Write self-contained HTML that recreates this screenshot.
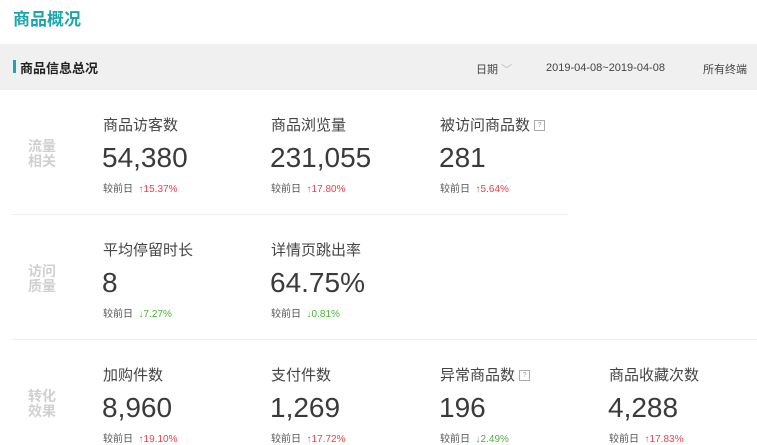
<!DOCTYPE html><html><head><meta charset="utf-8"><style>
body{margin:0;width:757px;height:442px;overflow:hidden;background:#fff;font-family:"Liberation Sans","Noto Sans CJK SC",sans-serif;position:relative}
.a{position:absolute;white-space:nowrap}
.t{left:13px;top:5px;font-size:17px;font-weight:bold;color:#1ba6ae}
.bar{left:0;top:44px;width:757px;height:46px;background:#f0f0f0}
.lbl{font-size:15px;color:#444}
.num{font-size:28px;color:#3a3a3a}
.cmp{font-size:10px;color:#555}
.up{color:#e4454e}.dn{color:#4bb33b}
.g{font-size:14px;font-weight:bold;color:#d0d0d0;line-height:15px;left:28px}
.q{display:inline-block;width:9px;height:9px;border:1px solid #aaa;font-size:7px;line-height:9px;text-align:center;color:#999;vertical-align:3px;margin-left:4px}
.hr{height:1px;background:#eee;left:12px}
</style></head><body>
<div class="a t">商品概况</div>
<div class="a bar"></div>
<div class="a" style="left:13px;top:60px;width:3px;height:13px;background:#1ba6ae"></div>
<div class="a" style="left:20px;top:58px;font-size:13px;font-weight:bold;color:#222">商品信息总况</div>
<div class="a" style="left:476px;top:61px;font-size:11px;color:#444">日期 <span style="color:#bbb">﹀</span></div>
<div class="a" style="left:546px;top:62px;font-size:11px;color:#444">2019-04-08~2019-04-08</div>
<div class="a" style="left:703px;top:61px;font-size:11px;color:#444">所有终端</div>

<div class="a g" style="top:139px">流量<br>相关</div>
<div class="a g" style="top:264px">访问<br>质量</div>
<div class="a g" style="top:389px">转化<br>效果</div>
<div class="a hr" style="top:214px;width:556px"></div>
<div class="a hr" style="top:339px;width:745px"></div>

<div class="a lbl" style="left:103px;top:114px">商品访客数</div>
<div class="a num" style="left:102px;top:142px">54,380</div>
<div class="a cmp" style="left:103px;top:180px">较前日 <span class="up">&nbsp;↑15.37%</span></div>
<div class="a lbl" style="left:271px;top:114px">商品浏览量</div>
<div class="a num" style="left:270px;top:142px">231,055</div>
<div class="a cmp" style="left:271px;top:180px">较前日 <span class="up">&nbsp;↑17.80%</span></div>
<div class="a lbl" style="left:440px;top:114px">被访问商品数<span class="q">?</span></div>
<div class="a num" style="left:439px;top:142px">281</div>
<div class="a cmp" style="left:440px;top:180px">较前日 <span class="up">&nbsp;↑5.64%</span></div>

<div class="a lbl" style="left:103px;top:239px">平均停留时长</div>
<div class="a num" style="left:102px;top:267px">8</div>
<div class="a cmp" style="left:103px;top:305px">较前日 <span class="dn">&nbsp;↓7.27%</span></div>
<div class="a lbl" style="left:271px;top:239px">详情页跳出率</div>
<div class="a num" style="left:270px;top:267px">64.75%</div>
<div class="a cmp" style="left:271px;top:305px">较前日 <span class="dn">&nbsp;↓0.81%</span></div>

<div class="a lbl" style="left:103px;top:364px">加购件数</div>
<div class="a num" style="left:102px;top:392px">8,960</div>
<div class="a cmp" style="left:103px;top:430px">较前日 <span class="up">&nbsp;↑19.10%</span></div>
<div class="a lbl" style="left:271px;top:364px">支付件数</div>
<div class="a num" style="left:270px;top:392px">1,269</div>
<div class="a cmp" style="left:271px;top:430px">较前日 <span class="up">&nbsp;↑17.72%</span></div>
<div class="a lbl" style="left:440px;top:364px">异常商品数<span class="q">?</span></div>
<div class="a num" style="left:439px;top:392px">196</div>
<div class="a cmp" style="left:440px;top:430px">较前日 <span class="dn">&nbsp;↓2.49%</span></div>
<div class="a lbl" style="left:609px;top:364px">商品收藏次数</div>
<div class="a num" style="left:608px;top:392px">4,288</div>
<div class="a cmp" style="left:609px;top:430px">较前日 <span class="up">&nbsp;↑17.83%</span></div>
</body></html>
